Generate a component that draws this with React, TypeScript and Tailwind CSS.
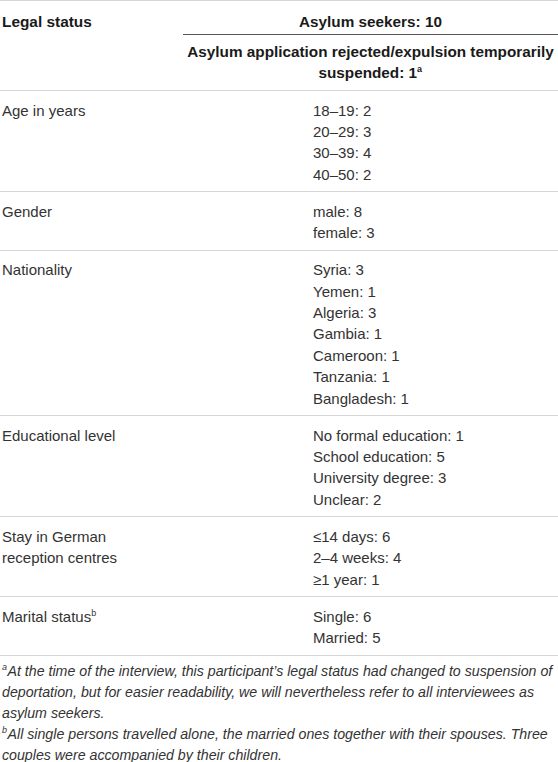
import React from "react";

const Sup = ({ c }: { c: string }) => (
  <span className="relative -top-[6px] text-[9px] leading-none align-baseline pr-[0.5px]">{c}</span>
);

const rows: { label: React.ReactNode; values: string[] }[] = [
  { label: "Age in years", values: ["18–19: 2", "20–29: 3", "30–39: 4", "40–50: 2"] },
  { label: "Gender", values: ["male: 8", "female: 3"] },
  {
    label: "Nationality",
    values: ["Syria: 3", "Yemen: 1", "Algeria: 3", "Gambia: 1", "Cameroon: 1", "Tanzania: 1", "Bangladesh: 1"],
  },
  {
    label: "Educational level",
    values: ["No formal education: 1", "School education: 5", "University degree: 3", "Unclear: 2"],
  },
  {
    label: (
      <>
        Stay in German
        <br />
        reception centres
      </>
    ),
    values: ["≤14 days: 6", "2–4 weeks: 4", "≥1 year: 1"],
  },
  {
    label: (
      <>
        Marital status
        <Sup c="b" />
      </>
    ),
    values: ["Single: 6", "Married: 5"],
  },
];

export default function App() {
  return (
    <div
      className="w-[558px] bg-white text-[15px] text-[#333333]"
      style={{ fontFamily: '"Liberation Sans", Arial, Helvetica, sans-serif' }}
    >
      {/* Header */}
      <div className="flex border-t border-[#d6d6d6] border-b">
        <div className="w-[183px] shrink-0 pl-[2px] pt-[10px] font-bold text-[15.4px] text-[#1a1a1a] leading-[21px]">
          Legal status
        </div>
        <div className="flex-1 flex flex-col text-center font-bold text-[15.3px] text-[#1a1a1a] leading-[21px]">
          <div className="pt-[10px] pb-[2px] border-b border-[#555555]">Asylum seekers: 10</div>
          <div className="pt-[6px] pb-[7px] whitespace-nowrap">
            Asylum application rejected/expulsion temporarily
            <br />
            suspended: 1
            <Sup c="a" />
          </div>
        </div>
      </div>

      {/* Body */}
      {rows.map((r, i) => (
        <div key={i} className="flex border-b border-[#d6d6d6] pt-[8.6px] pb-[6px] leading-[21.4px]">
          <div className="w-[183px] shrink-0 pl-[2px]">{r.label}</div>
          <div className="flex-1 pl-[130px] flex flex-col">
            {r.values.map((v) => (
              <div key={v}>{v}</div>
            ))}
          </div>
        </div>
      ))}

      {/* Footnotes */}
      <div className="pl-[2px] pt-[5px] italic text-[14.2px] leading-[21px] text-[#333333]">
        <p>
          <Sup c="a" />
          At the time of the interview, this participant’s legal status had changed to suspension of deportation, but
          for easier readability, we will nevertheless refer to all interviewees as asylum seekers.
        </p>
        <p>
          <Sup c="b" />
          All single persons travelled alone, the married ones together with their spouses. Three couples were
          accompanied by their children.
        </p>
      </div>
    </div>
  );
}
